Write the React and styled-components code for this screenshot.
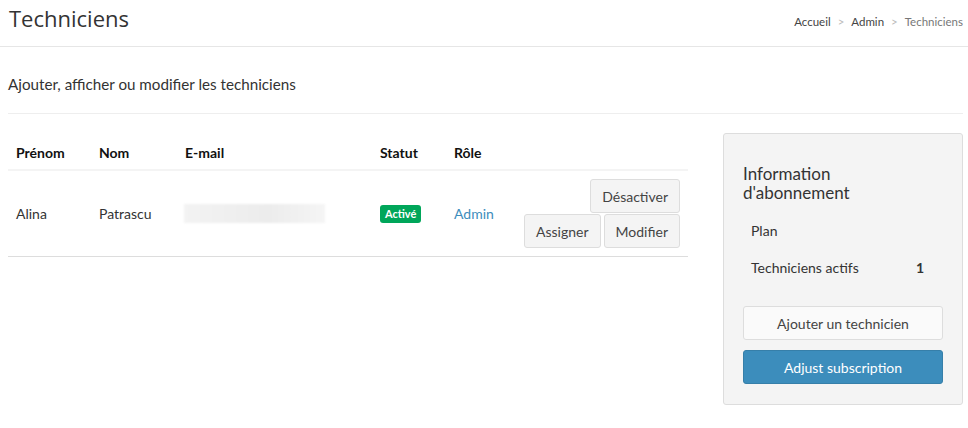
import React from "react";
import styled, { createGlobalStyle } from "styled-components";

const GlobalStyle = createGlobalStyle`
  body {
    margin: 0;
    background: #ffffff;
    font-family: "Lato", "Liberation Sans", sans-serif;
    color: #333333;
  }
`;

const Header = styled.div`
  height: 47px;
  display: flex;
  justify-content: space-between;
  align-items: center;
  padding: 0 5px 0 9px;
  border-bottom: 1px solid #e6e6e6;
  box-sizing: border-box;
`;

const Title = styled.h1`
  margin: 0 0 10px 0;
  font-family: "Open Sans", sans-serif;
  font-weight: 400;
  font-size: 22px;
  color: #333;
`;

const Crumbs = styled.div`
  display: flex;
  gap: 7px;
  font-size: 11.5px;
  margin-bottom: 4px;
`;

const Crumb = styled.span`
  color: ${(p) => (p.active ? "#777" : p.sep ? "#bbb" : "#444")};
`;

const Content = styled.div`
  padding: 0 5px 0 8px;
`;

const Subtitle = styled.div`
  padding: 28px 0 20px 0;
  font-size: 15.2px;
  color: #333;
  border-bottom: 1px solid #eeeeee;
`;

const Row = styled.div`
  display: flex;
  justify-content: space-between;
  align-items: flex-start;
  margin-top: 21px;
`;

const Table = styled.table`
  width: 680px;
  flex-shrink: 0;
  border-collapse: collapse;
  table-layout: fixed;
  font-size: 14px;
`;

const Th = styled.th`
  width: ${(p) => p.w}px;
  box-sizing: border-box;
  text-align: left;
  font-weight: 700;
  color: #111;
  padding: 9px 8px 8px 8px;
  border-bottom: 2px solid #f4f4f4;
`;

const Td = styled.td`
  padding: 8px;
  vertical-align: middle;
  color: #333;
  border-bottom: 1px solid #dddddd;
  text-align: ${(p) => (p.right ? "right" : "left")};
`;

const Blur = styled.div`
  width: 141px;
  height: 19px;
  margin-left: -1px;
  background: linear-gradient(90deg, #f3f3f3, #ececec 60%, #f5f5f5);
  filter: blur(1px);
`;

const Badge = styled.span`
  display: inline-block;
  background: #00a65a;
  color: #fff;
  font-weight: 700;
  font-size: 11px;
  padding: 2px 5px 3px;
  border-radius: 3px;
`;

const Link = styled.a`
  color: #3c8dbc;
  text-decoration: none;
  cursor: pointer;
`;

const Actions = styled.div`
  display: flex;
  flex-direction: column;
  align-items: flex-end;
  gap: 1px;
`;

const ButtonLine = styled.div`
  display: flex;
  gap: 3px;
`;

const Button = styled.button`
  height: 34px;
  padding: 0 11px;
  font-family: inherit;
  font-size: 14px;
  white-space: nowrap;
  color: #444;
  background: ${(p) => (p.primary ? "#3c8dbc" : p.light ? "#fafafa" : "#f4f4f4")};
  border: 1px solid ${(p) => (p.primary ? "#367fa9" : "#dddddd")};
  border-radius: 3px;
  cursor: pointer;
  ${(p) => p.primary && "color: #fff;"}
  ${(p) => p.block && "width: 100%;"}
`;

const Panel = styled.div`
  width: 240px;
  flex-shrink: 0;
  box-sizing: border-box;
  margin-top: -2px;
  background: #f4f4f4;
  border: 1px solid #dddddd;
  border-radius: 3px;
  padding: 30px 19px 20px 19px;
`;

const PanelTitle = styled.h3`
  margin: 0 0 10px 0;
  font-weight: 400;
  font-size: 17px;
  line-height: 19px;
  color: #333;
`;

const InfoRow = styled.div`
  display: flex;
  justify-content: space-between;
  padding: 9px 19px 9px 8px;
  font-size: 14px;
  line-height: 19px;
  white-space: nowrap;
`;

const Value = styled.span`
  font-weight: 700;
`;

const PanelButtons = styled.div`
  display: flex;
  flex-direction: column;
  gap: 10px;
  margin-top: 20px;
`;

export default function App() {
  return (
    <>
      <GlobalStyle />
      <Header>
        <Title>Techniciens</Title>
        <Crumbs>
          <Crumb>Accueil</Crumb>
          <Crumb sep>&gt;</Crumb>
          <Crumb>Admin</Crumb>
          <Crumb sep>&gt;</Crumb>
          <Crumb active>Techniciens</Crumb>
        </Crumbs>
      </Header>
      <Content>
        <Subtitle>Ajouter, afficher ou modifier les techniciens</Subtitle>
        <Row>
          <Table>
            <thead>
              <tr>
                <Th w={83}>Prénom</Th>
                <Th w={86}>Nom</Th>
                <Th w={195}>E-mail</Th>
                <Th w={74}>Statut</Th>
                <Th w={69}>Rôle</Th>
                <Th w={173}></Th>
              </tr>
            </thead>
            <tbody>
              <tr>
                <Td>Alina</Td>
                <Td>Patrascu</Td>
                <Td>
                  <Blur />
                </Td>
                <Td>
                  <Badge>Activé</Badge>
                </Td>
                <Td>
                  <Link>Admin</Link>
                </Td>
                <Td right>
                  <Actions>
                    <Button>Désactiver</Button>
                    <ButtonLine>
                      <Button>Assigner</Button>
                      <Button>Modifier</Button>
                    </ButtonLine>
                  </Actions>
                </Td>
              </tr>
            </tbody>
          </Table>
          <Panel>
            <PanelTitle>
              Information
              <br />
              d'abonnement
            </PanelTitle>
            <InfoRow>
              <span>Plan</span>
            </InfoRow>
            <InfoRow>
              <span>Techniciens actifs</span>
              <Value>1</Value>
            </InfoRow>
            <PanelButtons>
              <Button light block>
                Ajouter un technicien
              </Button>
              <Button primary block>
                Adjust subscription
              </Button>
            </PanelButtons>
          </Panel>
        </Row>
      </Content>
    </>
  );
}
